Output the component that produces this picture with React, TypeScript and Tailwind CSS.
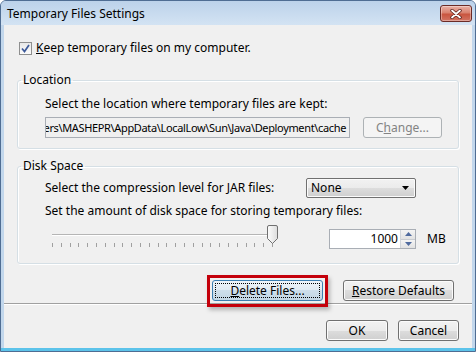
import React from "react";

const btn =
  "flex items-center justify-center rounded-[3px] border border-[#707070] bg-[linear-gradient(to_bottom,#f2f2f2_0%,#ebebeb_50%,#dddddd_50%,#cfcfcf_100%)] shadow-[inset_0_0_0_1px_#fbfbfb] text-black";

function Ticks() {
  const ticks = [];
  for (let i = 0; i < 26; i++) {
    const x = 7.5 + Math.round(i * 8.8);
    ticks.push(<line key={i} x1={x} y1={18} x2={x} y2={22} stroke="#a0a0a0" strokeWidth={1} />);
  }
  return <>{ticks}</>;
}

export default function App() {
  return (
    <div className="w-[476px] h-[352px] [font-family:'Noto_Sans',sans-serif] text-[12px] leading-[16px] text-black bg-[#c2d7ec] border border-[#4f6d93] rounded-t-[6px] flex flex-col overflow-hidden">
      {/* Title bar */}
      <div className="h-[24px] flex items-start justify-between pl-[6px] pr-[3px] bg-[linear-gradient(to_bottom,#bcd2ea,#d3e3f3)]">
        <div className="mt-[5px] text-[12px] leading-[16px] text-black">Temporary Files Settings</div>
        <div className="mt-[4px] w-[32px] h-[17px] rounded-[3px] border border-[#6b2b26] bg-[linear-gradient(to_bottom,#eab1a6_0%,#d9826f_45%,#c9553f_55%,#d27463_100%)] flex items-center justify-center shadow-[inset_0_0_0_1px_rgba(255,255,255,0.35)]">
          <svg width="12" height="10" viewBox="0 0 12 10">
            <path d="M2 1.5 L10 8.5 M10 1.5 L2 8.5" stroke="#5a1f1a" strokeWidth="3.4" strokeLinecap="round" />
            <path d="M2 1.5 L10 8.5 M10 1.5 L2 8.5" stroke="#ffffff" strokeWidth="1.8" strokeLinecap="round" />
          </svg>
        </div>
      </div>

      {/* Client area */}
      <div className="flex-1 mx-[3px] bg-[#f0f0f0] flex flex-col">
        {/* Checkbox row */}
        <div className="mt-[15px] pl-[15px] h-[16px] flex items-center">
          <div className="w-[13px] h-[13px] border border-[#8e8f8f] bg-[linear-gradient(to_bottom,#e8e8e8,#fbfbfb)] flex items-center justify-center">
            <svg width="11" height="11" viewBox="0 0 11 11">
              <path d="M2 5.5 L4.5 8.5 L9 2" fill="none" stroke="#3d5a9a" strokeWidth="1.7" />
            </svg>
          </div>
          <span className="ml-[4px]">
            <u>K</u>eep temporary files on my computer.
          </span>
        </div>

        {/* Location */}
        <fieldset className="mt-[16px] mx-[13px] border border-[#d5dfe5] rounded-[3px] shadow-[inset_1px_1px_0_#fff,1px_1px_0_#fff] p-0 m-0">
          <legend className="ml-[3px] px-[2px] leading-[16px]">Location</legend>
          <div className="pl-[27px] pb-[10px]">
            <div className="mt-[8px]">Select the location where temporary files are kept:</div>
            <div className="mt-[5px] flex">
              <div className="w-[305px] h-[21px] border border-[#a9aeb5] bg-[#f0f0f0] overflow-hidden flex items-center justify-end pr-[3px] whitespace-nowrap text-[11px] tracking-[-0.35px]">
                ers\MASHEPR\AppData\LocalLow\Sun\Java\Deployment\cache
              </div>
              <div className="ml-[13px] w-[79px] h-[21px] rounded-[3px] border border-[#adb2b5] bg-[#f4f4f4] text-[#838383] flex items-center justify-center">
                <span>
                  C<u>h</u>ange...
                </span>
              </div>
            </div>
          </div>
        </fieldset>

        {/* Disk Space */}
        <fieldset className="mt-[9px] mx-[13px] border border-[#d5dfe5] rounded-[3px] shadow-[inset_1px_1px_0_#fff,1px_1px_0_#fff] p-0 m-0">
          <legend className="ml-[3px] px-[2px] leading-[16px]">Disk Space</legend>
          <div className="pl-[27px] pb-[14px]">
            <div className="mt-[4px] h-[20px] flex items-center">
              <div className="w-[261px]">Select the compression level for JAR files:</div>
              <div className="w-[110px] h-[20px] rounded-[2px] border border-[#707070] bg-[linear-gradient(to_bottom,#f2f2f2_0%,#ebebeb_50%,#dddddd_50%,#cfcfcf_100%)] shadow-[inset_0_0_0_1px_#fbfbfb] flex items-center justify-between pl-[4px] pr-[6px]">
                <span>None</span>
                <svg width="7" height="4" viewBox="0 0 7 4">
                  <path d="M0 0 L7 0 L3.5 4 Z" fill="#000" />
                </svg>
              </div>
            </div>
            <div className="mt-[5px]">Set the amount of disk space for storing temporary files:</div>
            <div className="mt-[6px] flex items-start">
              <svg width="240" height="24" viewBox="0 0 240 24">
                <line x1="7" y1="9.5" x2="232" y2="9.5" stroke="#b5b5b5" strokeWidth="1" />
                <line x1="7" y1="10.5" x2="232" y2="10.5" stroke="#ffffff" strokeWidth="1" />
                <Ticks />
                <defs>
                  <linearGradient id="thumb" x1="0" y1="0" x2="1" y2="0">
                    <stop offset="0" stopColor="#fdfdfd" />
                    <stop offset="1" stopColor="#dcdcdc" />
                  </linearGradient>
                </defs>
                <path d="M222.5 2 Q222.5 0.5 224 0.5 L231 0.5 Q232.5 0.5 232.5 2 L232.5 13.5 L227.5 18.5 L222.5 13.5 Z" fill="url(#thumb)" stroke="#707070" strokeWidth="1" />
              </svg>
              <div className="ml-[44px] mt-[4px] w-[87px] h-[20px] border border-[#a9aeb5] bg-white flex items-stretch">
                <div className="flex-1 flex items-center justify-end pr-[2px]">1000</div>
                <div className="w-[15px] flex flex-col border-l border-[#d0d4d9]">
                  <div className="flex-1 flex items-center justify-center bg-[linear-gradient(to_bottom,#f4f4f4,#e2e2e2)] border-b border-[#c9ccd1]">
                    <svg width="7" height="4" viewBox="0 0 7 4">
                      <path d="M0 4 L7 4 L3.5 0 Z" fill="#4f6a9e" />
                    </svg>
                  </div>
                  <div className="flex-1 flex items-center justify-center bg-[linear-gradient(to_bottom,#f4f4f4,#e2e2e2)]">
                    <svg width="7" height="4" viewBox="0 0 7 4">
                      <path d="M0 0 L7 0 L3.5 4 Z" fill="#4f6a9e" />
                    </svg>
                  </div>
                </div>
              </div>
              <div className="ml-[11px] mt-[4px] h-[20px] flex items-center">MB</div>
            </div>
          </div>
        </fieldset>

        {/* Delete / Restore */}
        <div className="mt-[16px] flex justify-end pr-[18px]">
          <div className="relative">
            <div className="w-[111px] h-[21px] rounded-[3px] border border-[#3c7fb1] bg-[linear-gradient(to_bottom,#eef4f9_0%,#dfeaf2_50%,#cedfeb_50%,#c2d6e4_100%)] flex items-center justify-center p-[2px]">
              <div className="w-full h-full border border-dotted border-black flex items-center justify-center">
                <span>
                  <u>D</u>elete Files...
                </span>
              </div>
            </div>
            <div className="absolute -left-[5px] -top-[5px] -right-[5px] -bottom-[6px] border-[3px] border-[#c4000b] shadow-[2px_3px_4px_rgba(0,0,0,0.25)]" />
          </div>
          <div className={`${btn} ml-[20px] w-[111px] h-[21px]`}>
            <span>
              <u>R</u>estore Defaults
            </span>
          </div>
        </div>

        {/* Separator */}
        <div className="mt-[2px] border-t border-[#a0a0a0] border-b border-b-white" />

        {/* OK / Cancel */}
        <div className="mt-[15px] flex justify-end pr-[13px]">
          <div className={`${btn} w-[62px] h-[21px]`}>OK</div>
          <div className={`${btn} ml-[10px] w-[61px] h-[21px]`}>Cancel</div>
        </div>
      </div>
      <div className="h-[3px] bg-[#5cc3ea]" />
    </div>
  );
}
